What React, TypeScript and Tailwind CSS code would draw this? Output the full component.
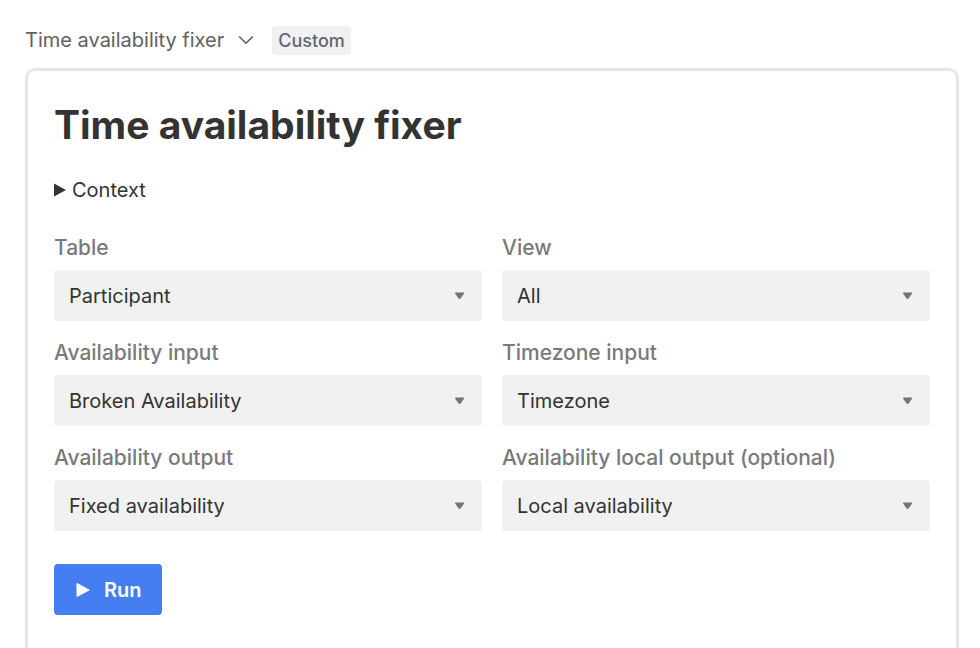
import React from "react";

type Field = { id: string; label: string; value: string };

const fields: Field[] = [
  { id: "table", label: "Table", value: "Participant" },
  { id: "view", label: "View", value: "All" },
  { id: "availability-input", label: "Availability input", value: "Broken Availability" },
  { id: "timezone-input", label: "Timezone input", value: "Timezone" },
  { id: "availability-output", label: "Availability output", value: "Fixed availability" },
  { id: "local-output", label: "Availability local output (optional)", value: "Local availability" },
];

function SelectField({ id, label, value }: Field) {
  return (
    <div className="flex flex-col gap-2.5">
      <label htmlFor={id} className="text-[21px] leading-6 font-medium text-[#7a7a7a]">
        {label}
      </label>
      <div className="grid items-center">
        <select
          id={id}
          defaultValue={value}
          className="col-start-1 row-start-1 h-[51px] w-full appearance-none rounded bg-[#f1f1f1] pr-10 pl-[15px] text-xl text-[#333333]"
        >
          <option>{value}</option>
        </select>
        <svg
          aria-hidden="true"
          viewBox="0 0 12 8"
          className="pointer-events-none col-start-1 row-start-1 mr-4 h-2 w-3 justify-self-end"
        >
          <path d="M1.7 1.2h7.8L6.1 6a.7.7 0 0 1-1 0Z" fill="#757575" stroke="#757575" strokeWidth="1.4" strokeLinejoin="round" />
        </svg>
      </div>
    </div>
  );
}

export default function App() {
  return (
    <div className="flex min-h-screen flex-col bg-white pr-[21px] pl-[25px] font-['Inter',sans-serif] text-[#333333]">
      <header className="flex h-[68px] items-center gap-[18px] pt-3">
        <button type="button" className="flex items-center gap-3.5 text-xl text-[#616161]">
          Time availability fixer
          <svg aria-hidden="true" viewBox="0 0 16 10" className="h-2.5 w-4" fill="none">
            <path d="M1.2 1.5 8 8.2l6.8-6.7" stroke="#616161" strokeWidth="1.6" />
          </svg>
        </button>
        <span className="rounded bg-[#f1f1f1] px-1.5 text-lg leading-[29px] font-medium text-[#616670]">
          Custom
        </span>
      </header>

      <main className="flex-1 rounded-t-[10px] border-3 border-b-0 border-[#e5e5e5] px-[26px] pt-7 pb-8">
        <h1 className="text-[39px] leading-[52px] font-bold">Time availability fixer</h1>

        <details className="mt-[25px]">
          <summary className="flex cursor-pointer list-none items-center gap-1.5 text-xl leading-7">
            <svg aria-hidden="true" viewBox="0 0 12 14" className="h-3.5 w-3">
              <path d="M0 .5 12 7 0 13.5Z" fill="#333333" />
            </svg>
            Context
          </summary>
          <p className="text-base">Fixes availability times for the selected table.</p>
        </details>

        <form>
          <div className="mt-8 grid grid-cols-2 gap-5">
            {fields.map((field) => (
              <SelectField key={field.id} {...field} />
            ))}
          </div>
          <button
            type="button"
            className="mt-[33px] flex h-[51px] items-center gap-3.5 rounded bg-[#457ef0] pr-5 pl-[22px] text-xl font-semibold text-white"
          >
            <svg aria-hidden="true" viewBox="0 0 14 16" className="h-4 w-3.5">
              <path d="M1 1.5 13.2 8 1 14.5Z" fill="#ffffff" stroke="#ffffff" strokeWidth="1" strokeLinejoin="round" />
            </svg>
            Run
          </button>
        </form>
      </main>
    </div>
  );
}
